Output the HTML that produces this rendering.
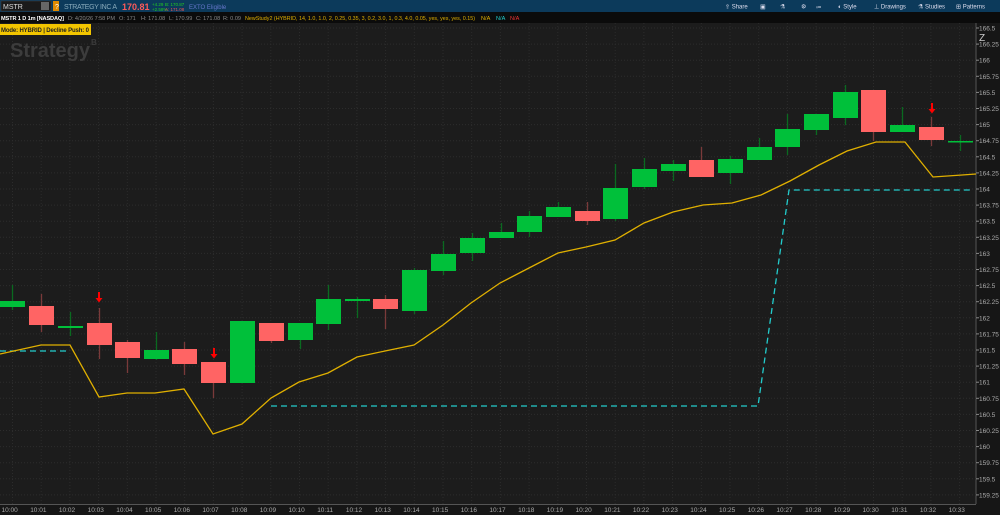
<!DOCTYPE html>
<html><head><meta charset="utf-8"><style>
body{margin:0;width:1000px;height:515px;overflow:hidden;background:#1c1c1c;font-family:"Liberation Sans",sans-serif;}
svg{display:block}
</style></head><body>
<svg width="1000" height="515" xmlns="http://www.w3.org/2000/svg" font-family="Liberation Sans, sans-serif">
<rect width="1000" height="515" fill="#1c1c1c"/>
<rect x="976" y="23" width="24" height="492" fill="#161616"/>
<rect x="0" y="504" width="1000" height="11" fill="#161616"/>
<line x1="976" y1="23" x2="976" y2="504" stroke="#555" stroke-width="1"/>
<line x1="0" y1="504.5" x2="976" y2="504.5" stroke="#555" stroke-width="1"/>
<g id="grid" stroke="#2c2c2c" stroke-width="1" stroke-dasharray="1,2"></g>
<g id="ylab" font-size="6.5" fill="#aaa"></g>
<g id="xlab" font-size="6.5" fill="#aaa"></g>
<!-- top bar -->
<rect x="0" y="0" width="1000" height="12" fill="#0c3a5b"/>
<rect x="1" y="1" width="50" height="10" fill="#1a1a1a" stroke="#444" stroke-width="0.5"/>
<text x="3" y="9" font-size="7" fill="#ddd">MSTR</text>
<rect x="41" y="2" width="8" height="8" fill="#666"/>
<rect x="53" y="1" width="6" height="10" fill="#e08a00"/>
<text x="55" y="9" font-size="7" fill="#fff">?</text>
<text x="64" y="9" font-size="7" fill="#8ab" textLength="53">STRATEGY INC A</text>
<text x="122" y="10" font-size="9" font-weight="bold" fill="#ff5a5a">170.81</text>
<text x="152" y="6" font-size="4.5" fill="#2c2">+4.29</text>
<text x="152" y="11" font-size="4.5" fill="#2c2">+2.58%</text>
<text x="165" y="6" font-size="4.5" fill="#2c2">B: 170.87</text>
<text x="165" y="11" font-size="4.5" fill="#e55">A: 171.08</text>
<text x="189" y="9" font-size="6" fill="#67c">EXTO Eligible</text>
<g font-size="6" fill="#dde">
<text x="725" y="8.5">⇪ Share</text><text x="760" y="8.5">▣</text><text x="780" y="8.5">⚗</text><text x="801" y="8.5">⚙</text>
<text x="816" y="8.5">⩴</text><text x="838" y="8.5">◐ Style</text><text x="874" y="8.5">⊥ Drawings</text>
<text x="918" y="8.5">⚗ Studies</text><text x="956" y="8.5">⊞ Patterns</text></g>
<!-- second bar -->
<rect x="0" y="12" width="1000" height="11" fill="#0b0b0b"/>
<g font-size="5.6">
<text x="1" y="20" fill="#fff" font-weight="bold" textLength="63">MSTR 1 D 1m [NASDAQ]</text>
<text x="68" y="20" fill="#888" textLength="47">D: 4/20/26 7:58 PM</text>
<text x="119" y="20" fill="#888">O: 171</text>
<text x="141" y="20" fill="#888">H: 171.08</text>
<text x="169" y="20" fill="#888">L: 170.99</text>
<text x="196" y="20" fill="#888">C: 171.08</text>
<text x="223" y="20" fill="#888">R: 0.09</text>
<text x="245" y="20" fill="#e0b000" textLength="230" lengthAdjust="spacingAndGlyphs">NewStudy2 (HYBRID, 14, 1.0, 1.0, 2, 0.25, 0.35, 3, 0.2, 3.0, 1, 0.3, 4.0, 0.05, yes, yes, yes, 0.15)</text>
<text x="481" y="20" fill="#e0b000">N/A</text>
<text x="496" y="20" fill="#2cc">N/A</text>
<text x="510" y="20" fill="#e33">N/A</text>
</g>
<rect x="0" y="24" width="91" height="11" fill="#f2c500"/>
<text x="1" y="32" font-size="6" font-weight="bold" fill="#222" textLength="88">Mode: HYBRID | Decline Push: 0</text>
<text x="10" y="57" font-size="20" font-weight="bold" fill="#3c3c3c" textLength="80">Strategy</text><text x="91" y="45" font-size="8" font-weight="bold" fill="#3c3c3c">B</text>
<text x="979" y="41" font-size="10" fill="#ccc">Z</text>
<!-- lines -->
<polyline fill="none" stroke="#2cc" stroke-width="1.3" stroke-dasharray="6,4" points="0,351 70,351"/>
<polyline fill="none" stroke="#2cc" stroke-width="1.3" stroke-dasharray="6,4" points="271,406 758,406 789,190 972,190"/>
<polyline fill="none" stroke="#e0b000" stroke-width="1.3" points="0,354 41,345 70,345 99,397 127,393 155,393 184,389 213,434 242,424 271,398 299,382 328,373 357,357 385,351 414,345 443,325 471,303 500,283 529,268 558,253 586,247 615,240 644,223 673,212 703,205 732,203 761,195 790,181 819,165 847,151 876,142 905,142 933,177 962,175 976,174"/>
<g id="candles"></g>
<g fill="#f00">
<path d="M98,292v6h-2.5l3.5,4.5 3.5,-4.5h-2.5v-6z"/>
<path d="M213,348v6h-2.5l3.5,4.5 3.5,-4.5h-2.5v-6z"/>
<path d="M931,103v6h-2.5l3.5,4.5 3.5,-4.5h-2.5v-6z"/>
</g>
</svg>
<script>
var NS="http://www.w3.org/2000/svg";
function el(p,t,a,txt){var e=document.createElementNS(NS,t);for(var k in a)e.setAttribute(k,a[k]);if(txt)e.textContent=txt;document.getElementById(p).appendChild(e);}
function Y(p){return 189-(p-164)*64.4;}
for(var i=0;i<=29;i++){var p=166.5-i*0.25,y=Y(p);
 el("grid","line",{x1:0,x2:976,y1:y,y2:y});
 el("ylab","line",{x1:976,x2:979,y1:y,y2:y,stroke:"#888"});
 el("ylab","text",{x:979,y:y+2.5},String(+p.toFixed(2)));}
for(var i=0;i<34;i++){var x=12.5+28.7*i;
 el("grid","line",{x1:x,x2:x,y1:23,y2:504});
 el("xlab","text",{x:x-11,y:512},"10:"+(i<10?"0":"")+i);}
var G="#00c03a",R="#ff6464";
var c=[[0,301,307,285,310,G],[29,306,325,294,332,R],[58,326,328,312,336,G],[87,323,345,308,359,R],[115,342,358,340,373,R],[144,350,359,332,360,G],[172,349,364,342,375,R],[201,362,383,362,398,R],[230,321,383,321,383,G],[259,323,341,323,343,R],[288,323,340,323,349,G],[316,299,324,285,330,G],[345,299,301,297,318,G],[373,299,309,295,329,R],[402,270,311,268,314,G],[431,254,271,241,275,G],[460,238,253,233,261,G],[489,232,238,223,238,G],[517,216,232,211,237,G],[546,207,217,202,217,G],[575,211,221,202,225,R],[603,188,219,164,221,G],[632,169,187,158,189,G],[661,164,171,160,181,G],[689,160,177,147,177,R],[718,159,173,156,184,G],[747,147,160,138,160,G],[775,129,147,114,155,G],[804,114,130,114,135,G],[833,92,118,85,125,G],[861,90,132,90,141,R],[890,125,132,107,132,G],[919,127,140,117,146,R],[948,141,142,135,151,G]];
c.forEach(function(d){var cx=d[0]+12.5,w=d[5]==G?"#0a6a20":"#7a3a3a";
 el("candles","line",{x1:cx,x2:cx,y1:d[3],y2:d[4],stroke:w,"stroke-width":1.3});
 el("candles","rect",{x:d[0],y:d[1],width:25,height:Math.max(1.5,d[2]-d[1]),fill:d[5]});});
</script>
</body></html>
